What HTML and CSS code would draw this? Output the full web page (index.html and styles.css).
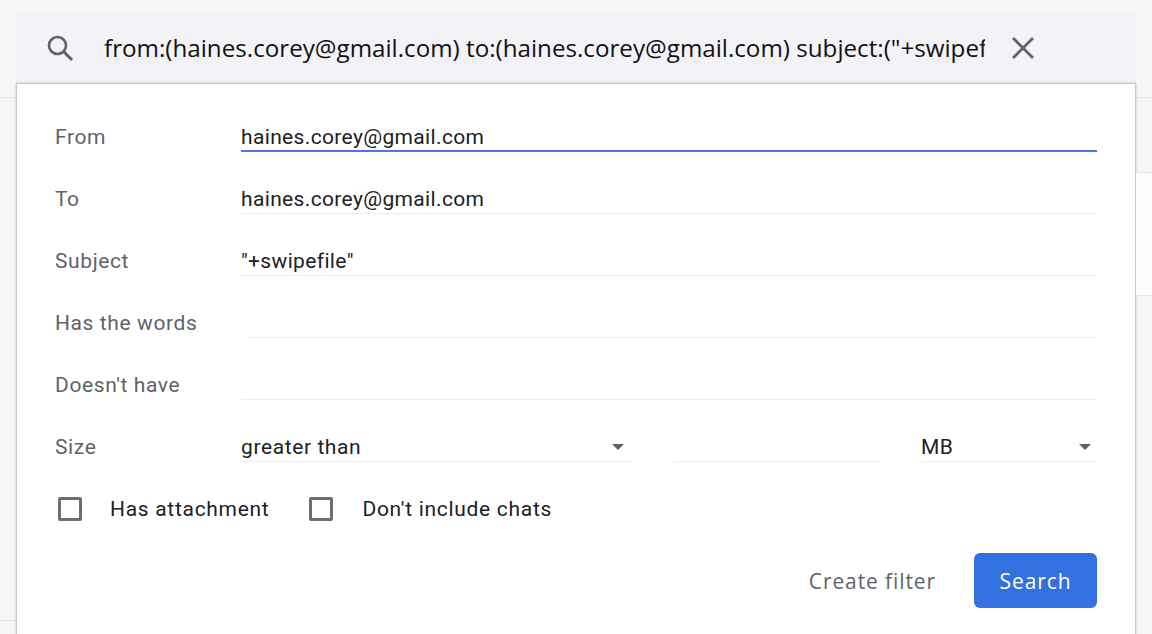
FILE: index.html
```html
<!DOCTYPE html>
<html lang="en">
<head>
<meta charset="utf-8">
<title>Search filter</title>
<link rel="stylesheet" href="styles.css">
</head>
<body>
<div class="page">
  <header class="searchbar">
    <svg class="search-icon" viewBox="0 0 30 30" width="30" height="30" aria-hidden="true">
      <circle cx="12.5" cy="12.5" r="8.5" fill="none" stroke="#5f6368" stroke-width="2.6"/>
      <path d="M18.8 18.8 L27 27" stroke="#5f6368" stroke-width="3" fill="none"/>
    </svg>
    <div class="query">from:(haines.corey@gmail.com) to:(haines.corey@gmail.com) subject:("+swipefile")</div>
    <svg class="clear-icon" viewBox="0 0 24 24" width="24" height="24" aria-hidden="true">
      <path d="M2 2 L22 22 M22 2 L2 22" stroke="#5f6368" stroke-width="2.8" fill="none"/>
    </svg>
  </header>
  <main class="backdrop">
    <div class="gutter gutter-left">
      <div class="band band-top"></div>
      <div class="band band-long"></div>
    </div>
    <section class="panel">
      <div class="row"><div class="label">From</div><div class="field focused">haines.corey@gmail.com</div></div>
      <div class="row"><div class="label">To</div><div class="field">haines.corey@gmail.com</div></div>
      <div class="row"><div class="label">Subject</div><div class="field">"+swipefile"</div></div>
      <div class="row"><div class="label">Has the words</div><div class="field inset"></div></div>
      <div class="row"><div class="label">Doesn't have</div><div class="field"></div></div>
      <div class="row">
        <div class="label">Size</div>
        <div class="size-fields">
          <div class="field select comparator">greater than<span class="caret"></span></div>
          <div class="field amount"></div>
          <div class="field select unit">MB<span class="caret caret-unit"></span></div>
        </div>
      </div>
      <div class="checks">
        <label class="check"><span class="box"></span>Has attachment</label>
        <label class="check"><span class="box"></span>Don't include chats</label>
      </div>
      <div class="actions">
        <span class="create">Create filter</span>
        <span class="search-btn">Search</span>
      </div>
    </section>
    <div class="gutter gutter-right">
      <div class="band band-top"></div>
      <div class="band band-mid"></div>
      <div class="band band-white"></div>
    </div>
  </main>
</div>
</body>
</html>
```
FILE: styles.css
```css
html, body {
  margin: 0;
  height: 100%;
  overflow: hidden;
}
body {
  background: #f6f5f8;
  font-family: Roboto, "Liberation Sans", sans-serif;
  color: #202124;
}
.page {
  display: flex;
  flex-direction: column;
  height: 634px;
}
.searchbar {
  height: 71px;
  flex: none;
  display: flex;
  align-items: center;
  margin: 12px 0 0 16px;
  background: #f2f2f7;
  box-sizing: border-box;
  padding: 0 0 0 29px;
  width: 1120px;
}
.search-icon { flex: none; }
.query {
  margin-left: 29px;
  width: 881px;
  flex: none;
  overflow: hidden;
  white-space: nowrap;
  font-family: "Open Sans", sans-serif;
  font-size: 24.2px;
  color: #111114;
}
.clear-icon {
  flex: none;
  margin-left: 26px;
}
.backdrop {
  flex: 1;
  display: flex;
  min-height: 0;
}
.gutter {
  flex: none;
  width: 16px;
}
.band {
  box-sizing: border-box;
  border-bottom: 1px solid #e6e6e9;
}
.band-top { height: 15px; }
.band-mid { height: 75px; }
.band-white { height: 123px; background: #fdfcfd; }
.band-long { height: 523px; }
.panel {
  flex: none;
  width: 1120px;
  box-sizing: border-box;
  background: #fff;
  border: 1px solid #c9c9cd;
  border-bottom: 0;
  box-shadow: 0 0 2px rgba(60,64,67,.3);
  padding: 38px 38px 0 38px;
}
.row {
  display: flex;
  height: 62px;
  box-sizing: border-box;
  align-items: flex-start;
}
.label {
  width: 186px;
  flex: none;
  font-size: 21px;
  line-height: 30px;
  letter-spacing: .6px;
  color: #5f6368;
}
.field {
  flex: 1;
  height: 29px;
  box-sizing: content-box;
  font-size: 21px;
  line-height: 30px;
  letter-spacing: .35px;
  color: #202124;
  border-bottom: 1px solid #eeeef0;
}
.focused {
  height: 28px;
  border-bottom: 2px solid #4a78e0;
}
.inset {
  margin-left: 5px;
}
.size-fields {
  flex: 1;
  display: flex;
}
.select {
  position: relative;
}
.comparator { flex: none; width: 391px; letter-spacing: .6px; }
.amount { flex: none; width: 209px; margin-left: 41px; }
.unit { flex: none; width: 176px; margin-left: 39px; }
.caret {
  position: absolute;
  right: 8px;
  top: 12px;
  width: 0;
  height: 0;
  border-left: 6px solid transparent;
  border-right: 6px solid transparent;
  border-top: 6px solid #5f6368;
}
.caret-unit {
  right: 6px;
}
.checks {
  display: flex;
  height: 59px;
  align-items: flex-start;
}
.check {
  display: flex;
  align-items: center;
  height: 30px;
  font-size: 21px;
  letter-spacing: .7px;
  color: #202124;
  margin-left: 3px;
  margin-right: 37px;
}
.box {
  width: 18px;
  height: 18px;
  border: 3px solid #6b6e72;
  border-radius: 2px;
  margin-right: 28px;
}
.check + .check .box {
  margin-right: 29px;
}
.actions {
  display: flex;
  justify-content: flex-end;
  align-items: center;
  gap: 38px;
}
.create {
  font-family: "Open Sans", sans-serif;
  font-size: 21px;
  font-weight: 500;
  letter-spacing: .9px;
  color: #5f6368;
}
.search-btn {
  font-family: "Open Sans", sans-serif;
  font-size: 21px;
  font-weight: 500;
  letter-spacing: .9px;
  color: #fff;
  background: #3471e0;
  border-radius: 6px;
  width: 123px;
  height: 55px;
  display: flex;
  align-items: center;
  justify-content: center;
}
```
